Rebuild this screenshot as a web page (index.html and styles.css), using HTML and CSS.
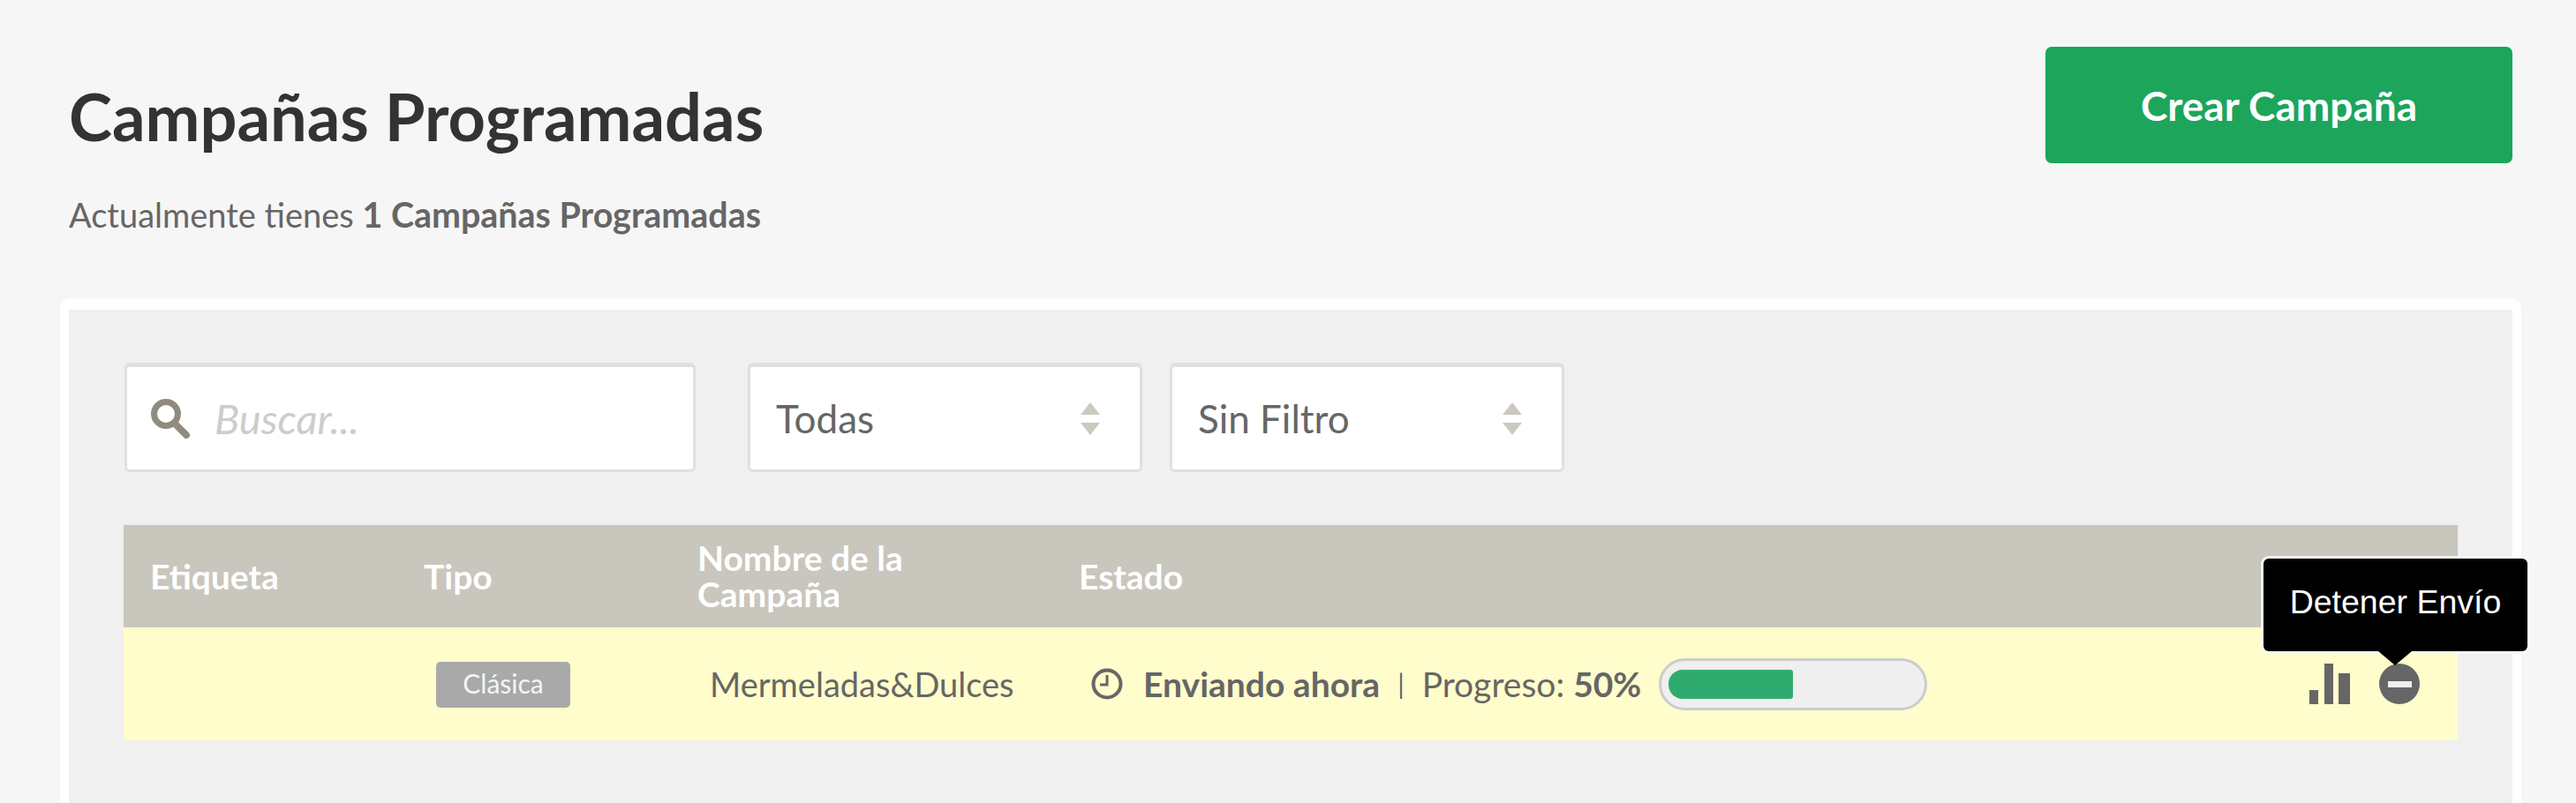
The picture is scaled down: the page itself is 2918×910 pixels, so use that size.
FILE: index.html
```html
<!DOCTYPE html>
<html lang="es">
  <head>
    <meta charset="UTF-8" />
    <meta name="viewport" content="width=device-width, initial-scale=1.0" />
    <title>Campañas Programadas</title>
    <link rel="stylesheet" href="styles.css">
  </head>
  <body>
    <header class="page-head">
      <div class="page-title">
        <h1>Campañas Programadas</h1>
        <p>Actualmente tienes <b>1 Campañas Programadas</b></p>
      </div>
      <a href="#" class="create-btn">Crear Campaña</a>
    </header>

    <main class="panel">
      <div class="filters">
        <div class="search">
          <svg class="search-icon" viewBox="0 0 46 46">
            <circle cx="18" cy="18" r="13.5" fill="none" stroke="#8f8c7d" stroke-width="7" />
            <path d="M28 29l13 13" fill="none" stroke="#8f8c7d" stroke-width="8" stroke-linecap="round" />
          </svg>
          <span class="placeholder">Buscar...</span>
        </div>
        <div class="select">
          <span>Todas</span>
          <span class="arrows"></span>
        </div>
        <div class="select">
          <span>Sin Filtro</span>
          <span class="arrows"></span>
        </div>
      </div>

      <table class="campaigns">
        <thead>
          <tr>
            <th class="col-label">Etiqueta</th>
            <th class="col-type">Tipo</th>
            <th class="col-name">Nombre de la<br />Campaña</th>
            <th>Estado</th>
          </tr>
        </thead>
        <tbody>
          <tr>
            <td></td>
            <td><span class="badge">Clásica</span></td>
            <td>Mermeladas&amp;Dulces</td>
            <td>
              <div class="status-row">
                <div class="status">
                  <svg class="clock" viewBox="0 0 36 38">
                    <circle cx="18" cy="19" r="15.5" fill="none" stroke="#666" stroke-width="4" />
                    <path d="M18 9v11h-8" fill="none" stroke="#666" stroke-width="3" />
                  </svg>
                  <b>Enviando ahora</b>
                  <span class="sep">|</span>
                  <span>Progreso: <b>50%</b></span>
                  <div class="progress"><div class="progress-fill" style="width: 50%"></div></div>
                </div>
                <div class="actions">
                  <svg class="bars" viewBox="0 0 46 46">
                    <rect x="0" y="30" width="10" height="16" fill="#666" />
                    <rect x="17" y="0" width="10" height="46" fill="#666" />
                    <rect x="33" y="11" width="13" height="35" fill="#666" />
                  </svg>
                  <div class="stop">
                    <span class="minus"></span>
                    <div class="tooltip">Detener Envío</div>
                  </div>
                </div>
              </div>
            </td>
          </tr>
        </tbody>
      </table>
    </main>
  </body>
</html>
```

FILE: styles.css
```css
* {
  margin: 0;
  padding: 0;
  box-sizing: border-box;
  font-family: Lato, "Open Sans", sans-serif;
}

html,
body {
  height: 100%;
  overflow: hidden;
}

body {
  display: flex;
  flex-direction: column;
  background-color: #f6f6f6;
  padding: 0 62px 0 68px;
  color: #666;
}

.page-head {
  display: flex;
  justify-content: space-between;
  align-items: flex-start;
  height: 338px;
  padding: 53px 10px 0 10px;
}

h1 {
  margin-top: 41px;
  font-size: 74px;
  line-height: 76px;
  font-weight: 700;
  color: #333;
}

.page-title p {
  margin-top: 51px;
  font-size: 38px;
  line-height: 44px;
}

.page-title b {
  font-size: 39.4px;
}

.create-btn {
  display: flex;
  justify-content: center;
  align-items: center;
  width: 529px;
  height: 132px;
  background-color: #1ca55b;
  color: white;
  border-radius: 7px;
  font-size: 46px;
  font-weight: 700;
  text-decoration: none;
}

.panel {
  flex: 1;
  background-color: #f0f0f0;
  border: 10px solid white;
  border-top-width: 13px;
  border-bottom: none;
  border-radius: 12px 12px 0 0;
  padding: 60px 62px 0 62px;
}

.filters {
  display: flex;
  height: 124px;
  margin-bottom: 60px;
}

.search,
.select {
  display: flex;
  align-items: center;
  background: white;
  border: 3px solid #e0e0e0;
  border-top-width: 5px;
  border-radius: 6px;
}

.search {
  width: 647px;
  margin-left: 1px;
  margin-right: 59px;
  padding-left: 26px;
}

.search-icon {
  width: 46px;
  height: 46px;
  margin-right: 27px;
}

.placeholder {
  font-size: 47px;
  font-style: italic;
  color: #ccc;
}

.select {
  justify-content: space-between;
  width: 447px;
  margin-right: 31px;
  padding: 0 45px 0 29px;
  font-size: 44px;
}

.arrows {
  position: relative;
  width: 22px;
  height: 37px;
}

.arrows::before,
.arrows::after {
  content: "";
  position: absolute;
  left: 0;
  border-left: 11px solid transparent;
  border-right: 11px solid transparent;
}

.arrows::before {
  top: 0;
  border-bottom: 14px solid #ccc9bf;
}

.arrows::after {
  bottom: 0;
  border-top: 14px solid #ccc9bf;
}

.campaigns {
  width: 2644px;
  table-layout: fixed;
  border-collapse: collapse;
}

.campaigns th {
  height: 116px;
  padding-left: 30px;
  background-color: #c9c6bd;
  color: white;
  text-align: left;
  font-size: 39px;
  line-height: 41px;
  font-weight: 700;
}

.col-label,
.col-type {
  width: 310px;
}

.col-name {
  width: 432px;
}

.campaigns td {
  height: 128px;
  padding-left: 44px;
  background-color: #fefdcb;
  font-size: 38px;
  vertical-align: middle;
}

.badge {
  display: inline-block;
  width: 152px;
  height: 52px;
  background-color: #a9a9a9;
  color: #f4f4f4;
  border-radius: 5px;
  text-align: center;
  font-size: 30px;
  line-height: 48px;
  vertical-align: middle;
}

.status-row {
  display: flex;
  justify-content: space-between;
  align-items: center;
}

.status {
  display: flex;
  align-items: center;
  font-size: 39px;
}

.clock {
  width: 36px;
  height: 38px;
  margin-right: 23px;
}

.sep {
  margin: 0 20px;
  font-size: 30px;
}

.status b {
  font-weight: 700;
}

.progress {
  width: 304px;
  height: 59px;
  margin-left: 20px;
  padding: 10px 8px;
  background-color: #efefef;
  border: 3px solid #ccc;
  border-radius: 30px;
}

.progress-fill {
  height: 100%;
  background-color: #30ab6f;
  border-radius: 16px 3px 3px 16px;
}

.actions {
  display: flex;
  align-items: flex-end;
  gap: 33px;
  margin-right: 43px;
}

.bars {
  width: 46px;
  height: 46px;
}

.stop {
  position: relative;
  display: flex;
  justify-content: center;
  align-items: center;
  width: 46px;
  height: 46px;
  background-color: #666;
  border-radius: 50%;
}

.minus {
  width: 27px;
  height: 7px;
  background-color: #eee;
}

.tooltip {
  position: absolute;
  bottom: 60px;
  left: -131px;
  width: 299px;
  height: 105px;
  background-color: black;
  color: white;
  border-radius: 6px;
  box-shadow: 0 0 0 3px rgba(255, 255, 255, 0.8);
  text-align: center;
  font-family: "Liberation Sans", Arial, sans-serif;
  font-size: 37.5px;
  line-height: 98px;
}

.tooltip::after {
  content: "";
  position: absolute;
  top: 100%;
  left: 130px;
  border-left: 19px solid transparent;
  border-right: 19px solid transparent;
  border-top: 16px solid black;
}
```
